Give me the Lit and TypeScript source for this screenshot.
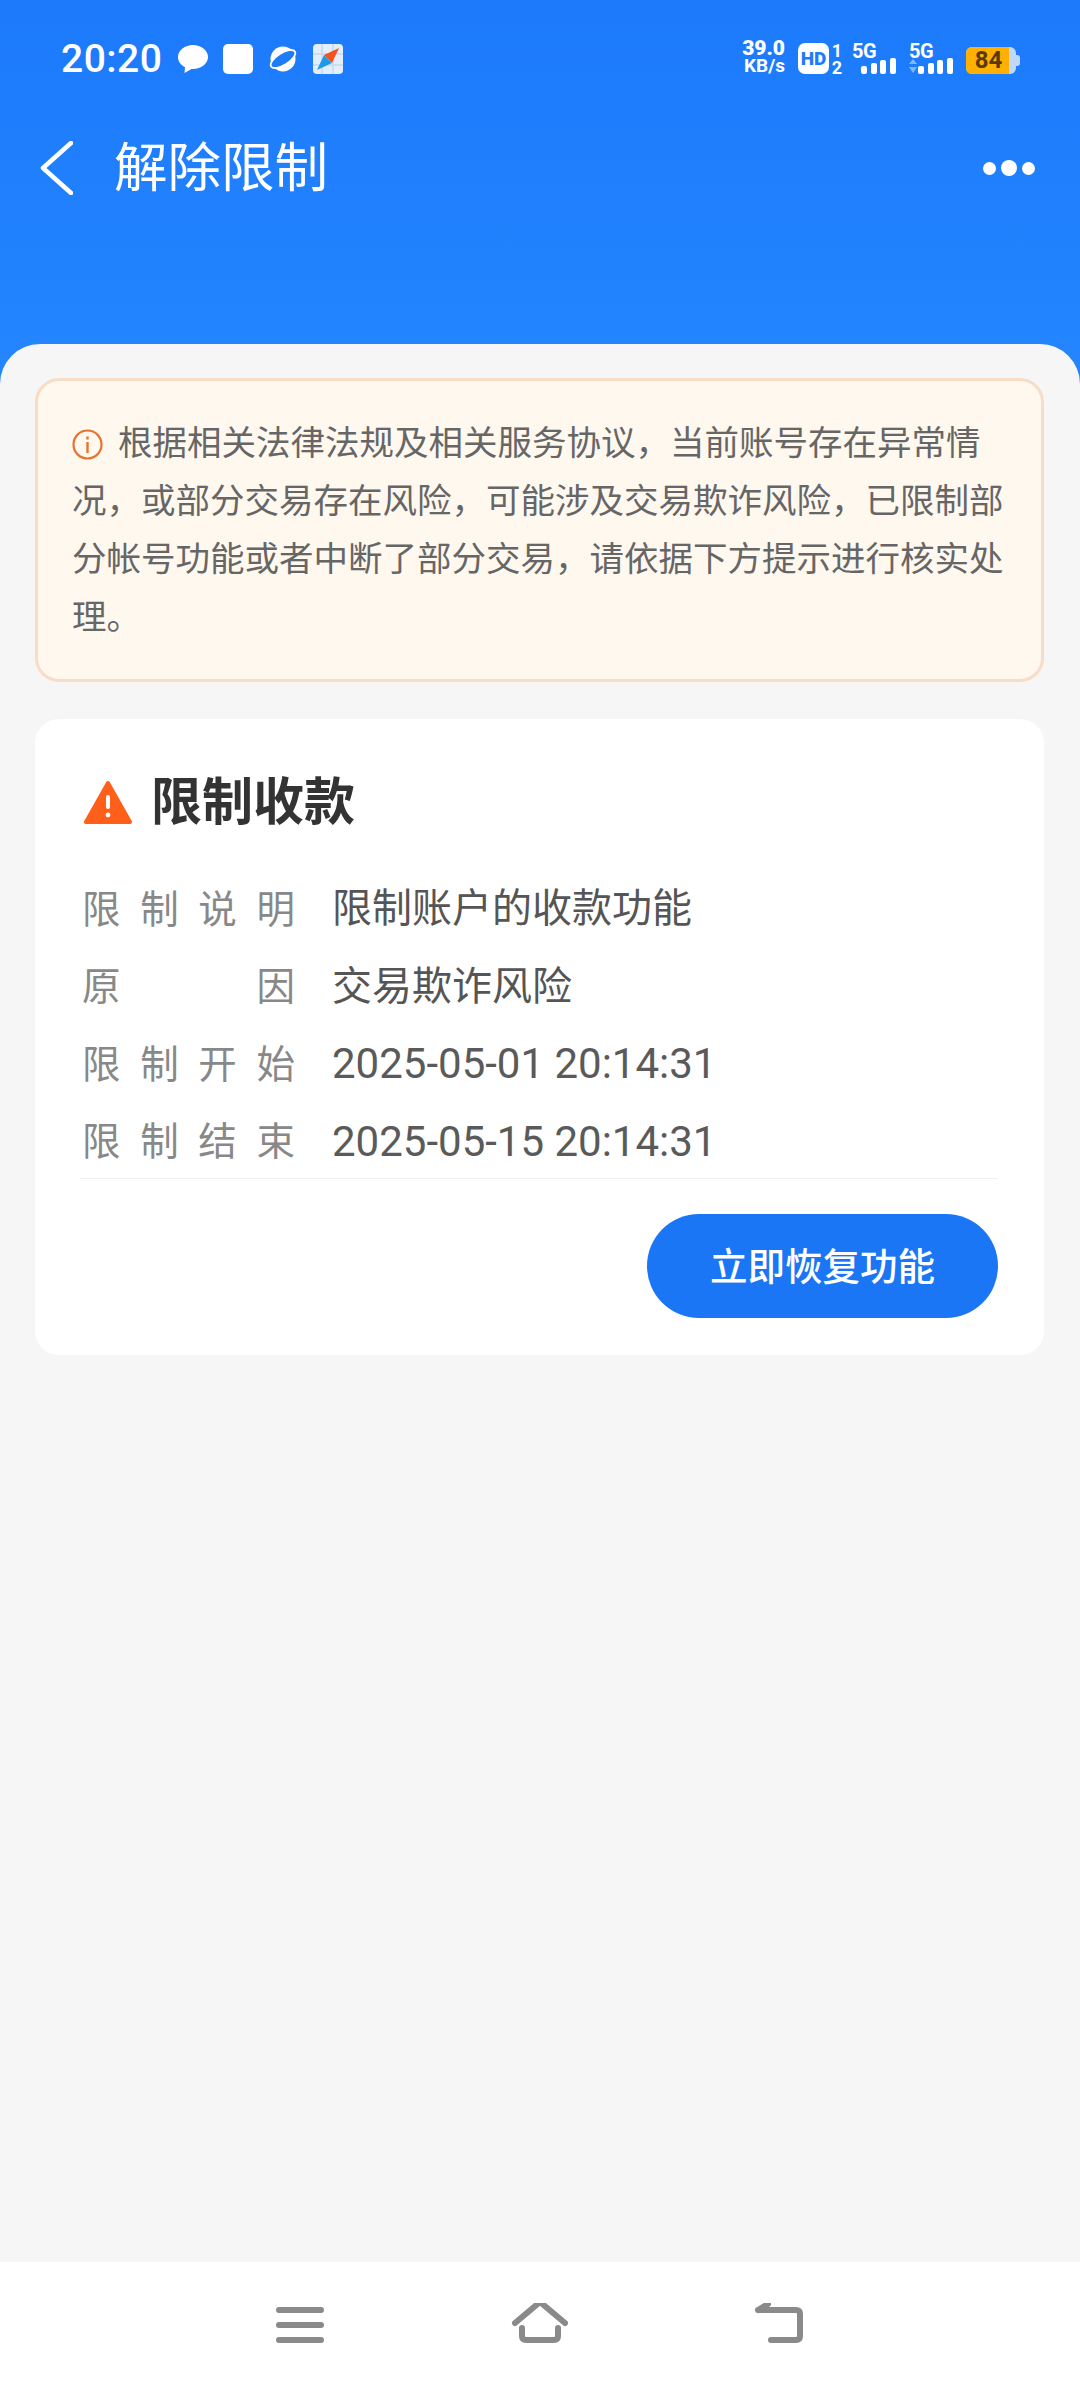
import { LitElement, html, css, svg } from 'lit';
import { customElement } from 'lit/decorators.js';

const ROWS = [
  { label: ['限', '制', '说', '明'], value: '限制账户的收款功能', num: false },
  { label: ['原', '因'], value: '交易欺诈风险', num: false },
  { label: ['限', '制', '开', '始'], value: '2025-05-01 20:14:31', num: true },
  { label: ['限', '制', '结', '束'], value: '2025-05-15 20:14:31', num: true },
];

const bars = svg`
  <rect x="9" y="8" width="6" height="8" rx="2" />
  <rect x="19" y="5" width="6" height="11" rx="2" />
  <rect x="28" y="2" width="6" height="14" rx="2" />
  <rect x="38" y="0" width="6" height="16" rx="2" />
`;

@customElement('app-root')
export class AppRoot extends LitElement {
  static styles = css`
    :host {
      display: block;
      width: 1080px;
      font-family: Roboto, 'Noto Sans CJK SC', sans-serif;
    }

    .page {
      display: flex;
      flex-direction: column;
      height: 2388px;
      background: linear-gradient(180deg, #1c7afb 0, #2486ff 400px, #f6f6f6 400px);
    }

    /* 状态栏 */
    .status {
      display: flex;
      align-items: center;
      justify-content: space-between;
      height: 114px;
      padding: 0 60px 0 61px;
      color: #fff;
    }
    .status-left {
      display: flex;
      align-items: center;
      padding-top: 3px;
    }
    .time {
      font-size: 39px;
      font-weight: 500;
      letter-spacing: 0.5px;
      margin-right: 16px;
    }
    .status-left svg {
      display: block;
      margin-right: 15px;
    }
    .status-right {
      display: flex;
      align-items: flex-end;
      height: 34px;
    }
    .speed {
      display: flex;
      flex-direction: column;
      align-items: flex-end;
      font-weight: 700;
      width: 46px;
      margin-right: 13px;
    }
    .speed b {
      font-size: 21px;
      line-height: 20px;
    }
    .speed span {
      font-size: 19px;
      line-height: 16px;
    }
    .hd {
      display: flex;
      align-items: center;
      justify-content: center;
      width: 31px;
      height: 31px;
      border-radius: 7px;
      background: #fff;
      color: #1f7cf8;
      font-size: 19px;
      font-weight: 900;
    }
    .sim {
      display: flex;
      flex-direction: column;
      justify-content: space-between;
      align-items: flex-end;
      width: 13px;
      height: 30px;
      margin-right: 10px;
      font-size: 18px;
      line-height: 13px;
      font-weight: 700;
    }
    .sig {
      display: flex;
      flex-direction: column;
      width: 44px;
      height: 29px;
      margin-right: 13px;
    }
    .sig span {
      font-size: 20px;
      line-height: 13px;
      font-weight: 700;
      letter-spacing: -0.5px;
    }
    .sig svg {
      display: block;
      fill: #fff;
    }
    .sig .updown {
      fill: rgba(255, 255, 255, 0.45);
    }
    .battery {
      display: flex;
      align-items: center;
      width: 54px;
      height: 27px;
    }
    .battery-body {
      display: flex;
      width: 50px;
      height: 27px;
      border-radius: 6px;
      background: #c2d8f7;
      overflow: hidden;
    }
    .battery-fill {
      width: 43px;
      background: #ffb000;
      color: #5b3a05;
      font-size: 24px;
      font-weight: 700;
      line-height: 27px;
      text-align: center;
      padding-left: 2px;
      box-sizing: border-box;
    }
    .battery-nub {
      width: 4px;
      height: 11px;
      border-radius: 0 3px 3px 0;
      background: #c2d8f7;
    }

    /* 标题栏 */
    .bar {
      display: flex;
      align-items: center;
      height: 108px;
      padding: 0 40px;
      margin-bottom: 122px;
      color: #fff;
    }
    .bar h1 {
      flex: 1;
      margin: 2px 0 0 41px;
      font-size: 53.5px;
      font-weight: 400;
      line-height: 60px;
    }
    .more {
      display: flex;
      align-items: center;
      gap: 5px;
      margin-right: 5px;
    }
    .more i {
      width: 13px;
      height: 13px;
      border-radius: 50%;
      background: #fff;
    }
    .more i:nth-child(2) {
      width: 16px;
      height: 16px;
    }

    /* 内容区 */
    .sheet {
      flex: 1;
      display: flex;
      flex-direction: column;
      gap: 37px;
      padding: 34px 36px 0 35px;
      border-radius: 40px 40px 0 0;
      background: #f6f6f6;
    }
    .notice {
      padding: 33px 30px 33px 34px;
      border: 3px solid #f8dcc6;
      border-radius: 24px;
      background: #fff8ef;
      color: #666;
      font-size: 34.5px;
      line-height: 58px;
    }
    .notice svg {
      vertical-align: -5px;
      margin-right: 15px;
    }
    .card {
      padding: 52px 46px 37px 45px;
      border-radius: 24px;
      background: #fff;
    }
    .card-title {
      display: flex;
      align-items: center;
      gap: 19px;
      margin: 0 0 35px 4px;
      color: #333;
      font-size: 51px;
      font-weight: 700;
      line-height: 60px;
    }
    .card-title span {
      padding-top: 2px;
    }
    .rows {
      border-bottom: 1px solid #f0f0f0;
      padding-left: 2px;
    }
    .row {
      display: flex;
      align-items: center;
      height: 77.5px;
    }
    .label {
      display: flex;
      justify-content: space-between;
      width: 213px;
      margin-right: 37px;
      padding-bottom: 2px;
      color: #888;
      font-size: 38.5px;
    }
    .value {
      padding-top: 5px;
      color: #555;
      font-size: 40px;
      line-height: 50px;
    }
    .value.num {
      font-size: 42px;
      color: #5a5a5a;
    }
    .actions {
      display: flex;
      justify-content: flex-end;
      margin-top: 35px;
    }
    .btn {
      width: 351px;
      height: 104px;
      padding: 0 0 5px;
      border: 0;
      border-radius: 52px;
      background: #1a76f5;
      color: #fff;
      font-family: inherit;
      font-size: 37.5px;
      font-weight: 500;
    }

    /* 底部导航 */
    .nav {
      flex: none;
      display: flex;
      justify-content: center;
      gap: 180px;
      height: 126px;
      background: #fff;
    }
    .nav svg {
      display: block;
      margin-top: 41px;
      fill: none;
      stroke: #8a8a8a;
      stroke-width: 6;
      stroke-linecap: round;
      stroke-linejoin: round;
    }
  `;

  render() {
    return html`
      <div class="page">
        <div class="status">
          <div class="status-left">
            <span class="time">20:20</span>
            <svg width="30" height="30" viewBox="0 0 30 30">
              <path fill="#fff" d="M15 1C7 1 0 6.300 0 13c0 4.400 2.700 8 7 10.200L6.500 29l7-4.100c.5 0 1 .1 1.500.1 8 0 15-5.300 15-12S23 1 15 1z" />
            </svg>
            <svg width="30" height="30" viewBox="0 0 30 30">
              <rect width="30" height="30" rx="5" fill="#fff" />
            </svg>
            <svg width="30" height="30" viewBox="0 0 30 30">
              <circle cx="15" cy="15" r="12.500" fill="#fff" />
              <ellipse cx="15" cy="15" rx="14" ry="6" fill="#1f7cf8" stroke="#fff" stroke-width="1.800" transform="rotate(-32 15 15)" />
            </svg>
            <svg width="30" height="30" viewBox="0 0 30 30">
              <rect width="30" height="30" rx="4" fill="#e3eefa" />
              <path stroke="#c5d9ef" stroke-width="1.500" d="M0 10h30M0 21h30M9 0v30M20 0v30" />
              <path fill="#1e9be8" d="M4 26l7-15 8 8z" />
              <path fill="#f4511e" d="M26 4l-15 7 8 8z" />
            </svg>
          </div>
          <div class="status-right">
            <div class="speed"><b>39.0</b><span>KB/s</span></div>
            <div class="hd">HD</div>
            <div class="sim"><span>1</span><span>2</span></div>
            <div class="sig">
              <span>5G</span>
              <svg width="44" height="16" viewBox="0 0 44 16">${bars}</svg>
            </div>
            <div class="sig">
              <span>5G</span>
              <svg width="44" height="16" viewBox="0 0 44 16">
                <path class="updown" d="M4 1l4 5H0zM4 15l4-6H0z" />
                ${bars}
              </svg>
            </div>
            <div class="battery">
              <div class="battery-body"><div class="battery-fill">84</div></div>
              <div class="battery-nub"></div>
            </div>
          </div>
        </div>

        <div class="bar">
          <svg width="33" height="54" viewBox="0 0 33 54" fill="none" stroke="#fff" stroke-width="4.500" stroke-linecap="round" stroke-linejoin="round">
            <path d="M31 2L3 27l28 25" />
          </svg>
          <h1>解除限制</h1>
          <div class="more"><i></i><i></i><i></i></div>
        </div>

        <div class="sheet">
          <div class="notice">
            <svg width="31" height="31" viewBox="0 0 31 31" fill="none" stroke="#e8722e" stroke-width="2.200">
              <circle cx="15.500" cy="15.500" r="14" />
              <path stroke-width="2.400" d="M15.500 13v11M15.500 7.500v3" />
            </svg>根据相关法律法规及相关服务协议，当前账号存在异常情况，或部分交易存在风险，可能涉及交易欺诈风险，已限制部分帐号功能或者中断了部分交易，请依据下方提示进行核实处理。
          </div>

          <div class="card">
            <div class="card-title">
              <svg width="48" height="44" viewBox="0 0 48 44">
                <path fill="#ff5f1a" stroke="#ff5f1a" stroke-width="4" stroke-linejoin="round" d="M24 3L2 42h44z" />
                <rect x="22" y="15" width="4" height="14" rx="2" fill="#fff" />
                <circle cx="24" cy="35" r="2.400" fill="#fff" />
              </svg>
              <span>限制收款</span>
            </div>
            <div class="rows">
              ${ROWS.map(
                (r) => html`
                  <div class="row">
                    <div class="label">${r.label.map((c) => html`<span>${c}</span>`)}</div>
                    <div class="value ${r.num ? 'num' : ''}">${r.value}</div>
                  </div>
                `
              )}
            </div>
            <div class="actions">
              <button class="btn">立即恢复功能</button>
            </div>
          </div>
        </div>

        <div class="nav">
          <svg width="60" height="50" viewBox="0 0 60 50">
            <path d="M9 7h42M9 22h42M9 37h42" />
          </svg>
          <svg width="60" height="50" viewBox="0 0 60 50">
            <path d="M5 20L30 -1l25 21" />
            <path d="M12 25v8q0 4 4 4h28q4 0 4-4v-8" />
          </svg>
          <svg width="60" height="50" viewBox="0 0 60 50">
            <path d="M8 7l10-6M8 7h38q4 0 4 4v22q0 4-4 4H21" />
          </svg>
        </div>
      </div>
    `;
  }
}

declare global {
  interface HTMLElementTagNameMap {
    'app-root': AppRoot;
  }
}
